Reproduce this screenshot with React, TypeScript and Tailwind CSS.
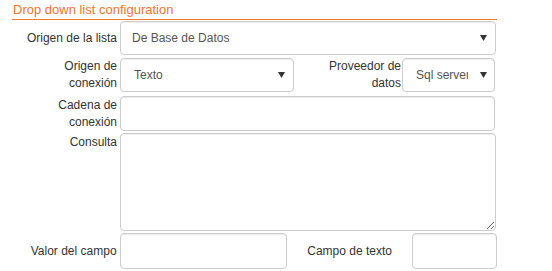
import React from "react";

const box = "border border-[#ccc] rounded-[4px] bg-white shadow-[inset_0_1px_1px_rgba(0,0,0,0.075)]";

function Arrow() {
  return (
    <svg width="7" height="6" viewBox="0 0 7 6" className="shrink-0">
      <polygon points="0,0 7,0 3.5,6" fill="#333" />
    </svg>
  );
}

function Label({ children, className = "" }: { children: React.ReactNode; className?: string }) {
  return <div className={"text-right text-[12px] leading-[17px] text-[#333] " + className}>{children}</div>;
}

export default function App() {
  return (
    <main className="w-[552px] h-[271px] bg-white pl-[12px] font-['Liberation_Sans',Arial,sans-serif]">
      <div className="w-[485px]">
        <div className="h-[20px] border-b border-[#f37a2b] pl-[1px] text-[13px] leading-[19px] text-[#f3742a]">
          Drop down list configuration
        </div>

        <div className="mt-[1px] flex items-center gap-[3px]">
          <Label className="w-[105px]">Origen de la lista</Label>
          <div className={box + " w-[376px] h-[34px] flex items-center justify-between pl-[11px] pr-[8px] text-[12px] text-[#555]"}>
            <span>De Base de Datos</span>
            <Arrow />
          </div>
        </div>

        <div className="mt-[3px] flex items-center">
          <Label className="w-[105px] mr-[3px]">Origen de<br />conexión</Label>
          <div className={box + " w-[174px] h-[34px] flex items-center justify-between pl-[13px] pr-[8px] text-[12px] text-[#555]"}>
            <span>Texto</span>
            <Arrow />
          </div>
          <Label className="w-[108px] pr-[1px]">Proveedor de<br />datos</Label>
          <div className={box + " w-[93px] h-[34px] flex items-center justify-between pl-[13px] pr-[7px] text-[12px] text-[#555]"}>
            <span className="w-[52px] overflow-hidden whitespace-nowrap">Sql server</span>
            <Arrow />
          </div>
        </div>

        <div className="mt-[4px] flex items-center gap-[3px]">
          <Label className="w-[105px]">Cadena de<br />conexión</Label>
          <div className={box + " w-[375px] h-[35px]"} />
        </div>

        <div className="mt-[2px] flex items-start gap-[3px]">
          <Label className="w-[105px] pt-[1px]">Consulta</Label>
          <textarea className={box + " w-[376px] h-[98px] block outline-none"} />
        </div>

        <div className="mt-[2px] flex items-center">
          <Label className="w-[105px] mr-[3px]">Valor del campo</Label>
          <div className={box + " w-[168px] h-[36px]"} />
          <div className="w-[126px] text-center text-[12px] text-[#333]">Campo de texto</div>
          <div className={box + " w-[85px] h-[36px]"} />
        </div>
      </div>
    </main>
  );
}
